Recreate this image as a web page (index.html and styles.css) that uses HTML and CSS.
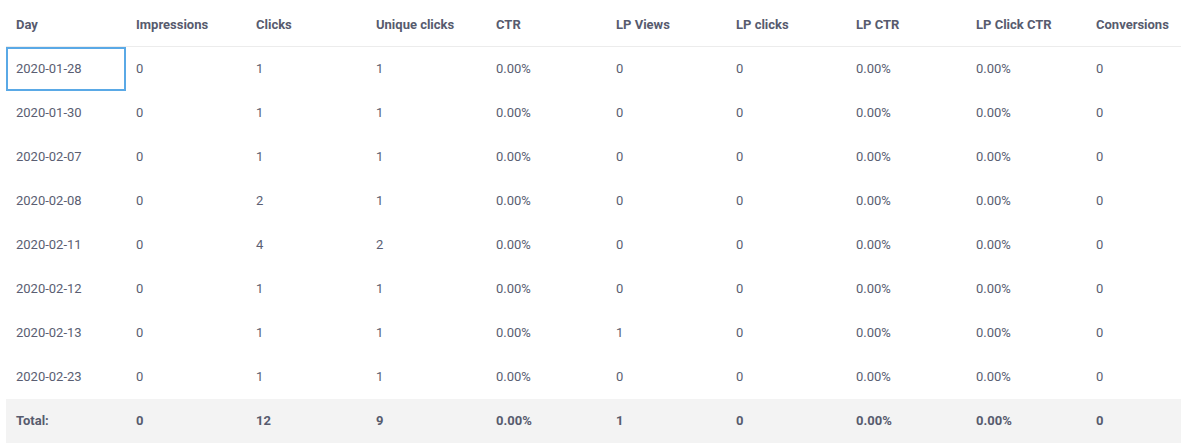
FILE: index.html
```html
<!DOCTYPE html>
<html>
<head>
<meta charset="utf-8">
<link rel="stylesheet" href="styles.css">
</head>
<body>
<div class="wrap">
<table class="report">
<thead>
<tr><th>Day</th><th>Impressions</th><th>Clicks</th><th>Unique clicks</th><th>CTR</th><th>LP Views</th><th>LP clicks</th><th>LP CTR</th><th>LP Click CTR</th><th>Conversions</th></tr>
</thead>
<tbody>
<tr><td class="selected">2020-01-28</td><td>0</td><td>1</td><td>1</td><td>0.00%</td><td>0</td><td>0</td><td>0.00%</td><td>0.00%</td><td>0</td></tr>
<tr><td>2020-01-30</td><td>0</td><td>1</td><td>1</td><td>0.00%</td><td>0</td><td>0</td><td>0.00%</td><td>0.00%</td><td>0</td></tr>
<tr><td>2020-02-07</td><td>0</td><td>1</td><td>1</td><td>0.00%</td><td>0</td><td>0</td><td>0.00%</td><td>0.00%</td><td>0</td></tr>
<tr><td>2020-02-08</td><td>0</td><td>2</td><td>1</td><td>0.00%</td><td>0</td><td>0</td><td>0.00%</td><td>0.00%</td><td>0</td></tr>
<tr><td>2020-02-11</td><td>0</td><td>4</td><td>2</td><td>0.00%</td><td>0</td><td>0</td><td>0.00%</td><td>0.00%</td><td>0</td></tr>
<tr><td>2020-02-12</td><td>0</td><td>1</td><td>1</td><td>0.00%</td><td>0</td><td>0</td><td>0.00%</td><td>0.00%</td><td>0</td></tr>
<tr><td>2020-02-13</td><td>0</td><td>1</td><td>1</td><td>0.00%</td><td>1</td><td>0</td><td>0.00%</td><td>0.00%</td><td>0</td></tr>
<tr><td>2020-02-23</td><td>0</td><td>1</td><td>1</td><td>0.00%</td><td>0</td><td>0</td><td>0.00%</td><td>0.00%</td><td>0</td></tr>
</tbody>
<tfoot>
<tr><td>Total:</td><td>0</td><td>12</td><td>9</td><td>0.00%</td><td>1</td><td>0</td><td>0.00%</td><td>0.00%</td><td>0</td></tr>
</tfoot>
</table>
</div>
</body>
</html>
```
FILE: styles.css
```css
html, body {
  margin: 0;
  padding: 0;
  background: #ffffff;
  overflow: hidden;
}
.wrap {
  padding: 0 0 0 6px;
}
.report {
  width: 1200px;
  table-layout: fixed;
  border-collapse: collapse;
  font-family: Roboto, "Liberation Sans", sans-serif;
  font-size: 13px;
  line-height: 16px;
  color: #5a5e72;
}
.report th {
  text-align: left;
  font-weight: bold;
  padding: 17px 10px 13px 10px;
  border-bottom: 1px solid #ececec;
  white-space: nowrap;
  color: #575b6e;
}
.report td {
  padding: 14px 10px 14px 10px;
  text-align: left;
  white-space: nowrap;
}
.report td.selected {
  outline: 2px solid #5aa9e6;
  outline-offset: -2px;
}
.report tfoot td {
  background: #f3f3f3;
  font-weight: bold;
  color: #575b6e;
}
```
